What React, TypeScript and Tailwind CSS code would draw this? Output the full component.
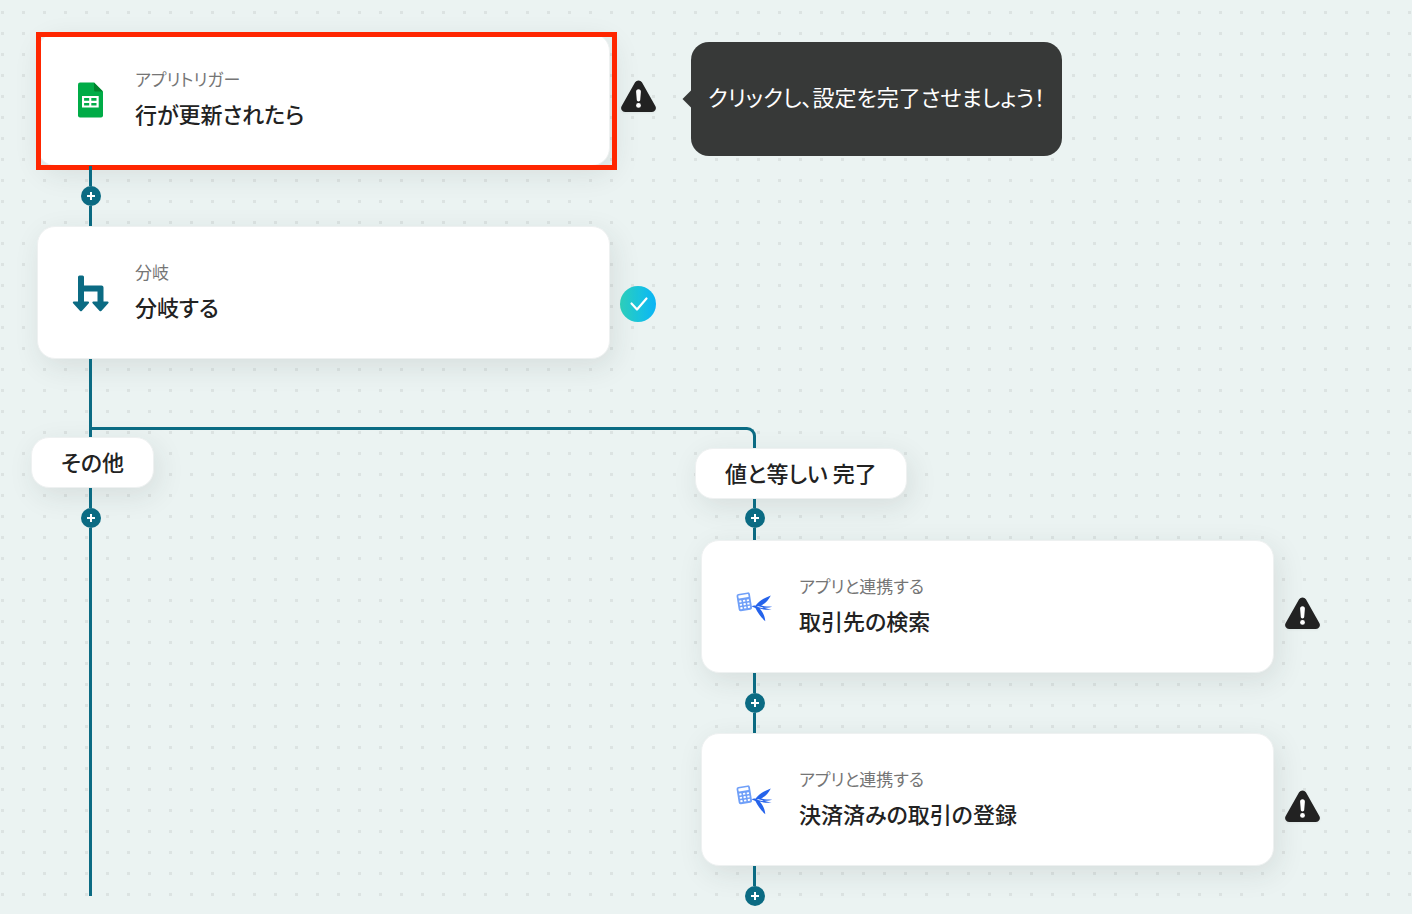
import type { ReactNode } from "react";
import { twMerge } from "tailwind-merge";

type Step = {
  label: string;
  title: string;
  icon: ReactNode;
};

function SheetIcon() {
  return (
    <svg viewBox="0 0 36 36" className="size-9 shrink-0" aria-hidden="true">
      <path
        d="M8 .5h14l9 9V33.500a2 2 0 0 1-2 2H8a2 2 0 0 1-2-2v-31a2 2 0 0 1 2-2z"
        fill="#00ac47"
      />
      <path d="M22 .5l9 9h-7.500a1.500 1.500 0 0 1-1.500-1.500z" fill="#00832d" />
      <path
        fillRule="evenodd"
        d="M10 14h16.700v11.600H10zM12.100 16.100v2.600h5.100v-2.600zM19.300 16.100v2.600h5.200v-2.600zM12.100 20.900v2.600h5.100v-2.600zM19.300 20.900v2.600h5.200v-2.600z"
        fill="#fff"
      />
    </svg>
  );
}

function BranchIcon() {
  return (
    <svg
      viewBox="0 0 36 36"
      className="size-9 shrink-0 overflow-visible"
      aria-hidden="true"
    >
      <path
        d="M7.500.500h3a1.500 1.500 0 0 1 1.500 1.500v8.500h17.500a2 2 0 0 1 2 2v14h4a1 1 0 0 1 .8 1.700l-7 7.700a1.200 1.200 0 0 1-1.700 0l-7-7.700a1 1 0 0 1 .8-1.700h4.100V16.500H12v10h4a1 1 0 0 1 .8 1.700l-7 7.700a1.200 1.200 0 0 1-1.700 0l-7-7.700a1 1 0 0 1 .8-1.700H6V2A1.500 1.500 0 0 1 7.500.500z"
        fill="#0b6b83"
      />
    </svg>
  );
}

function SwallowIcon() {
  return (
    <svg
      viewBox="0 0 36 36"
      className="size-9 shrink-0 overflow-visible"
      aria-hidden="true"
    >
      <g transform="rotate(-9 8.500 12.500)">
        <rect x="1.500" y="4" width="13.500" height="17.500" rx="2" fill="#6f9ff8" />
        <rect x="3.200" y="5.700" width="10.100" height="3" rx=".5" fill="#fff" />
        {[10.8, 14.2, 17.6].map((y) =>
          [3.3, 7.1, 10.9].map((x) => (
            <rect key={`${x}-${y}`} x={x} y={y} width="2.300" height="1.900" rx=".4" fill="#fff" />
          )),
        )}
      </g>
      <path
        d="M15.500 17.300c1.500-.7 2.700-.9 3.900-.6C22.800 12 28.300 8.700 34.800 6.400c-2 4.300-5.400 7.700-9.800 10.200 3.300.9 7 1.100 11.200 1.200-2.600.8-5.400 1.100-8.200.9 2.300.9 4.600 1.300 7.600 2.100-4.400.2-8.600-.1-12-1.300 3.300 3.600 5.300 7.700 5.700 12.700-4.400-3.700-7.500-8.400-9.900-13.100-1.200-.6-2.400-1.100-3.900-1.800z"
        fill="#2563eb"
      />
      <path d="M20.500 17.300c3.200 0 5.400.7 8 1.900-3.200-.1-6-.6-8-1.900z" fill="#fff" />
    </svg>
  );
}

function WarningIcon({ className }: { className?: string }) {
  return (
    <svg
      viewBox="0 0 36 36"
      className={twMerge("size-9 shrink-0 drop-shadow-xs", className)}
      role="img"
      aria-label="未設定"
    >
      <path
        d="M15.100 3.300a4 4 0 0 1 6.800 0L35.300 27.100a3.900 3.900 0 0 1-3.400 5.900H5.100a3.900 3.900 0 0 1-3.400-5.900z"
        fill="#222"
      />
      <path
        d="M18.500 10.200c1.500 0 2.500 1 2.400 2.500l-.7 8.300c-.1 1.900-3.300 1.900-3.400 0l-.7-8.300c-.1-1.500.9-2.500 2.400-2.500z"
        fill="#fff"
      />
      <circle cx="18.500" cy="26.400" r="2.400" fill="#fff" />
    </svg>
  );
}

function CheckIcon({ className }: { className?: string }) {
  return (
    <span
      className={twMerge(
        "size-9 shrink-0 rounded-full bg-linear-to-r from-[#2ed3bd] to-[#0cb4f6]",
        className,
      )}
    >
      <svg viewBox="0 0 36 36" role="img" aria-label="設定済み">
        <path
          d="M11.500 17.500l5.500 6L26.500 12.500"
          fill="none"
          stroke="#fff"
          strokeWidth="2.200"
          strokeLinecap="round"
          strokeLinejoin="round"
        />
      </svg>
    </span>
  );
}

function StepCard({ step, selected }: { step: Step; selected?: boolean }) {
  return (
    <div className="relative shrink-0">
      <button className="flex h-[133px] w-[573px] cursor-pointer items-center gap-[27px] rounded-[18px] border border-[#eef1f1] bg-white pl-[34px] text-left shadow-[4px_8px_28px_rgba(40,50,50,0.10)]">
        {step.icon}
        <span className="flex flex-col pb-0.5">
          <span className="text-[17px] leading-7 text-[#757575]">{step.label}</span>
          <span className="text-[22px] leading-10 font-medium text-[#222]">
            {step.title}
          </span>
        </span>
      </button>
      {selected && (
        <div className="pointer-events-none absolute -top-px -right-[7px] -bottom-1 -left-px border-5 border-[#ff2600]" />
      )}
    </div>
  );
}

function ConditionPill({ children }: { children: ReactNode }) {
  return (
    <button className="-ml-1.5 h-[51px] cursor-pointer self-start rounded-[18px] border border-[#eef1f1] bg-white px-[29px] pb-0.5 text-[22px] font-medium whitespace-nowrap text-[#222] shadow-[4px_8px_28px_rgba(40,50,50,0.10)]">
      {children}
    </button>
  );
}

function Line({ className }: { className: string }) {
  return <div className={twMerge("relative ml-[52px] w-[3px] bg-[#0b6b83]", className)} />;
}

function AddButton() {
  return (
    <button
      aria-label="追加"
      className="relative ml-11 flex size-5 cursor-pointer items-center justify-center rounded-full bg-[#0b6b83]"
    >
      <svg viewBox="0 0 8 8" className="size-2">
        <path d="M4 0v8M0 4h8" stroke="#fff" strokeWidth="2" />
      </svg>
    </button>
  );
}

export default function App() {
  return (
    <main className="min-h-screen overflow-hidden bg-[#ebf3f2] bg-[radial-gradient(circle,#dce3e2_1.5px,transparent_2px)] bg-size-[21px_21px] bg-position-[-8px_2px] pt-[33px] pb-2 pl-[37px] font-['Noto_Sans_CJK_JP',sans-serif] [font-feature-settings:'palt']">
      <div className="flex items-start gap-2.5">
        <StepCard
          selected
          step={{
            label: "アプリトリガー",
            title: "行が更新されたら",
            icon: <SheetIcon />,
          }}
        />
        <WarningIcon className="mt-[46px]" />
        <div
          role="tooltip"
          className="relative mt-[9px] ml-[25px] shrink-0 rounded-[18px] bg-[#373938] px-[17px] pt-10 pb-[46px] text-[22px] leading-7 whitespace-nowrap text-white"
        >
          <span className="absolute top-[51px] -left-1.5 size-3 rotate-45 bg-[#373938]" />
          クリックし、設定を完了させましょう！
        </div>
      </div>
      <Line className="h-5" />
      <AddButton />
      <Line className="h-5" />
      <div className="flex items-start gap-2.5">
        <StepCard
          step={{ label: "分岐", title: "分岐する", icon: <BranchIcon /> }}
        />
        <CheckIcon className="mt-15" />
      </div>
      <div className="flex">
        <section className="flex w-[664px] shrink-0 flex-col">
          <Line className="h-[78px]" />
          <ConditionPill>その他</ConditionPill>
          <Line className="h-5" />
          <AddButton />
          <Line className="h-[368px]" />
        </section>
        <section className="relative flex shrink-0 flex-col pt-[89px]">
          <div className="absolute top-[68px] -left-[610px] h-[21px] w-[665px] rounded-tr-[9px] border-t-3 border-r-3 border-[#0b6b83]" />
          <ConditionPill>値と等しい 完了</ConditionPill>
          <Line className="h-[9px]" />
          <AddButton />
          <Line className="h-3" />
          <div className="flex items-start gap-2.5">
            <StepCard
              step={{
                label: "アプリと連携する",
                title: "取引先の検索",
                icon: <SwallowIcon />,
              }}
            />
            <WarningIcon className="mt-14" />
          </div>
          <Line className="h-5" />
          <AddButton />
          <Line className="h-5" />
          <div className="flex items-start gap-2.5">
            <StepCard
              step={{
                label: "アプリと連携する",
                title: "決済済みの取引の登録",
                icon: <SwallowIcon />,
              }}
            />
            <WarningIcon className="mt-14" />
          </div>
          <Line className="h-5" />
          <AddButton />
        </section>
      </div>
    </main>
  );
}
